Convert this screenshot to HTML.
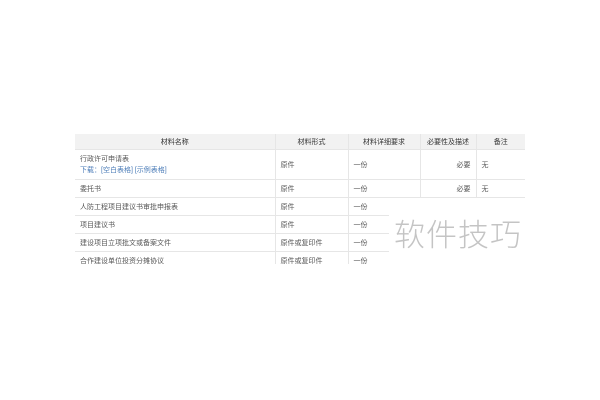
<!DOCTYPE html>
<html><head><meta charset="utf-8"><style>
body{margin:0;width:600px;height:400px;background:#fff;position:relative;overflow:hidden;font-family:"Liberation Sans","Noto Sans CJK SC",sans-serif;font-size:7px;color:#555}
.t{position:absolute;left:75px;top:134px;width:450px;height:130px;overflow:hidden}
table{border-collapse:collapse;width:450px;table-layout:fixed}
td,th{border-bottom:1px solid #e6e6e6;border-right:1px solid #e6e6e6;padding:0 5px;height:17px;text-align:left;font-weight:normal}
th{background:#f2f2f2;color:#333;text-align:center;height:15px}
td:last-child,th:last-child{border-right:none}
a{color:#4a7bb7}
.wm{position:absolute;left:389px;top:198px;width:140px;height:66px;background:#fff}
.wmt{position:absolute;left:394px;top:210px;font-size:31px;color:#c4c4c4;letter-spacing:1px;font-family:"Noto Sans CJK SC",sans-serif;font-weight:300}
</style></head><body>
<div class="t"><table>
<colgroup><col style="width:200px"><col style="width:73px"><col style="width:72px"><col style="width:56px"><col style="width:49px"></colgroup>
<tr><th>材料名称</th><th>材料形式</th><th>材料详细要求</th><th>必要性及描述</th><th>备注</th></tr>
<tr><td style="height:29px;line-height:11px">行政许可申请表<br><a>下载：[空白表格] [示例表格]</a></td><td>原件</td><td>一份</td><td style="text-align:right">必要</td><td>无</td></tr>
<tr><td>委托书</td><td>原件</td><td>一份</td><td style="text-align:right">必要</td><td>无</td></tr>
<tr><td>人防工程项目建议书审批申报表</td><td>原件</td><td>一份</td><td></td><td></td></tr>
<tr><td>项目建议书</td><td>原件</td><td>一份</td><td></td><td></td></tr>
<tr><td>建设项目立项批文或备案文件</td><td>原件或复印件</td><td>一份</td><td></td><td></td></tr>
<tr><td>合作建设单位投资分摊协议</td><td>原件或复印件</td><td>一份</td><td></td><td></td></tr>
</table></div>
<div class="wm"></div>
<div class="wmt">软件技巧</div>
</body></html>
